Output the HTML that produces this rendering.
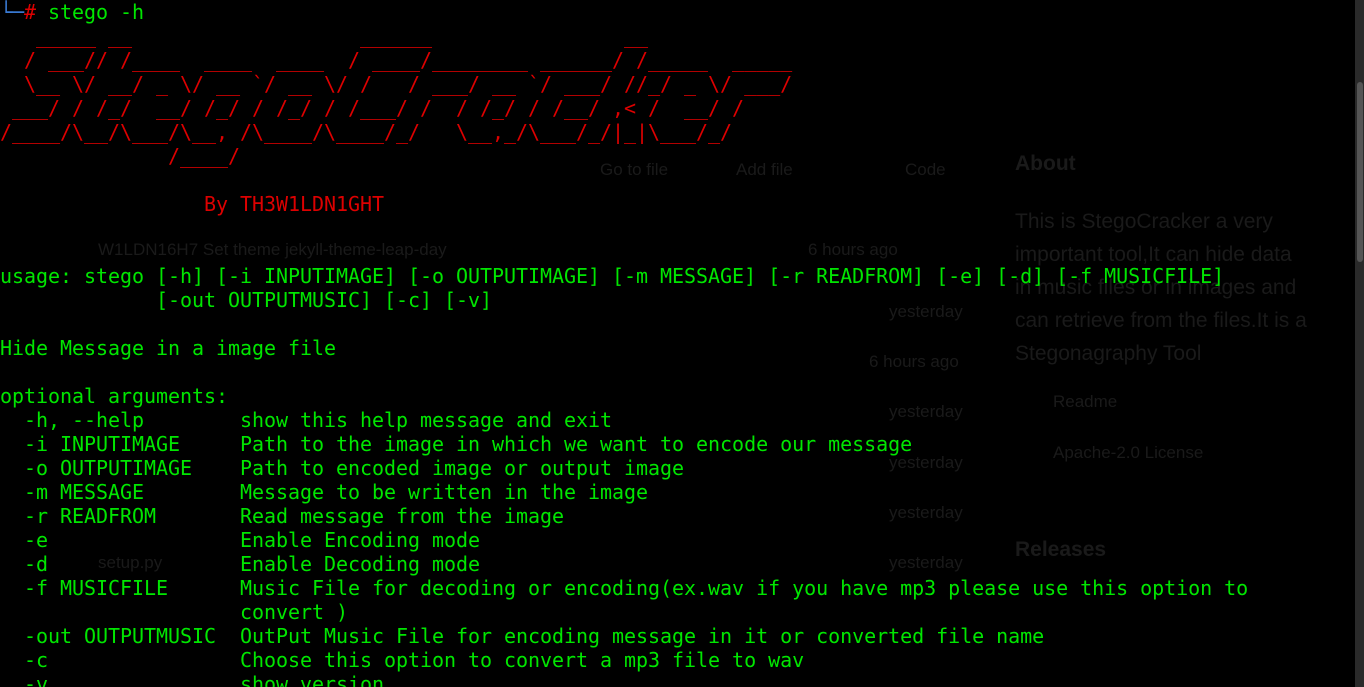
<!DOCTYPE html>
<html><head><meta charset="utf-8"><style>
html,body{margin:0;padding:0;width:1364px;height:687px;background:#000;overflow:hidden;position:relative}
.bg{position:absolute;font-family:"Liberation Sans",sans-serif;color:#1a1a1a;white-space:nowrap}
pre{position:absolute;left:0;top:0;margin:0;font-family:"DejaVu Sans Mono",monospace;font-size:20px;line-height:24px;letter-spacing:-0.04px;color:#00e600;white-space:pre}
.r{color:#dd0000}.b{color:#3a7bd5}
.sb{position:absolute;left:1355px;top:0;width:9px;height:687px;background:#2a2a2a}
.th{position:absolute;left:1357px;top:82px;width:6px;height:180px;background:#555;border-radius:3px}
</style></head><body>
<div class="bg" style="left:1015px;top:152px;font-size:21px;font-weight:bold">About</div>
<div class="bg" style="left:1015px;top:205px;font-size:21px;line-height:33px">This is StegoCracker a very<br>important tool,It can hide data<br>in music files or in images and<br>can retrieve from the files.It is a<br>Stegonagraphy Tool</div>
<div class="bg" style="left:1053px;top:392px;font-size:17px">Readme</div>
<div class="bg" style="left:1053px;top:443px;font-size:17px">Apache-2.0 License</div>
<div class="bg" style="left:1015px;top:538px;font-size:21px;font-weight:bold">Releases</div>
<div class="bg" style="left:98px;top:240px;font-size:17px">W1LDN16H7 Set theme jekyll-theme-leap-day</div>
<div class="bg" style="left:808px;top:240px;font-size:17px">6 hours ago</div>
<div class="bg" style="left:889px;top:302px;font-size:17px">yesterday</div>
<div class="bg" style="left:869px;top:352px;font-size:17px">6 hours ago</div>
<div class="bg" style="left:889px;top:402px;font-size:17px">yesterday</div>
<div class="bg" style="left:889px;top:453px;font-size:17px">yesterday</div>
<div class="bg" style="left:889px;top:503px;font-size:17px">yesterday</div>
<div class="bg" style="left:889px;top:553px;font-size:17px">yesterday</div>
<div class="bg" style="left:98px;top:553px;font-size:17px">setup.py</div>
<div class="bg" style="left:600px;top:160px;font-size:17px">Go to file</div>
<div class="bg" style="left:736px;top:160px;font-size:17px">Add file</div>
<div class="bg" style="left:905px;top:160px;font-size:17px">Code</div>
<div class="sb"></div><div class="th"></div>
<pre><span class="b">└─</span><span class="r">#</span> stego -h
<span class="r">   _____ __                   ______                __
  / ___// /____  ____  ____  / ____/________ ______/ /_____  _____
  \__ \/ __/ _ \/ __ `/ __ \/ /   / ___/ __ `/ ___/ //_/ _ \/ ___/
 ___/ / /_/  __/ /_/ / /_/ / /___/ /  / /_/ / /__/ ,&lt; /  __/ /
/____/\__/\___/\__, /\____/\____/_/   \__,_/\___/_/|_|\___/_/
              /____/

                 By TH3W1LDN1GHT</span>


usage: stego [-h] [-i INPUTIMAGE] [-o OUTPUTIMAGE] [-m MESSAGE] [-r READFROM] [-e] [-d] [-f MUSICFILE]
             [-out OUTPUTMUSIC] [-c] [-v]

Hide Message in a image file

optional arguments:
  -h, --help        show this help message and exit
  -i INPUTIMAGE     Path to the image in which we want to encode our message
  -o OUTPUTIMAGE    Path to encoded image or output image
  -m MESSAGE        Message to be written in the image
  -r READFROM       Read message from the image
  -e                Enable Encoding mode
  -d                Enable Decoding mode
  -f MUSICFILE      Music File for decoding or encoding(ex.wav if you have mp3 please use this option to
                    convert )
  -out OUTPUTMUSIC  OutPut Music File for encoding message in it or converted file name
  -c                Choose this option to convert a mp3 file to wav
  -v                show version</pre>
</body></html>
